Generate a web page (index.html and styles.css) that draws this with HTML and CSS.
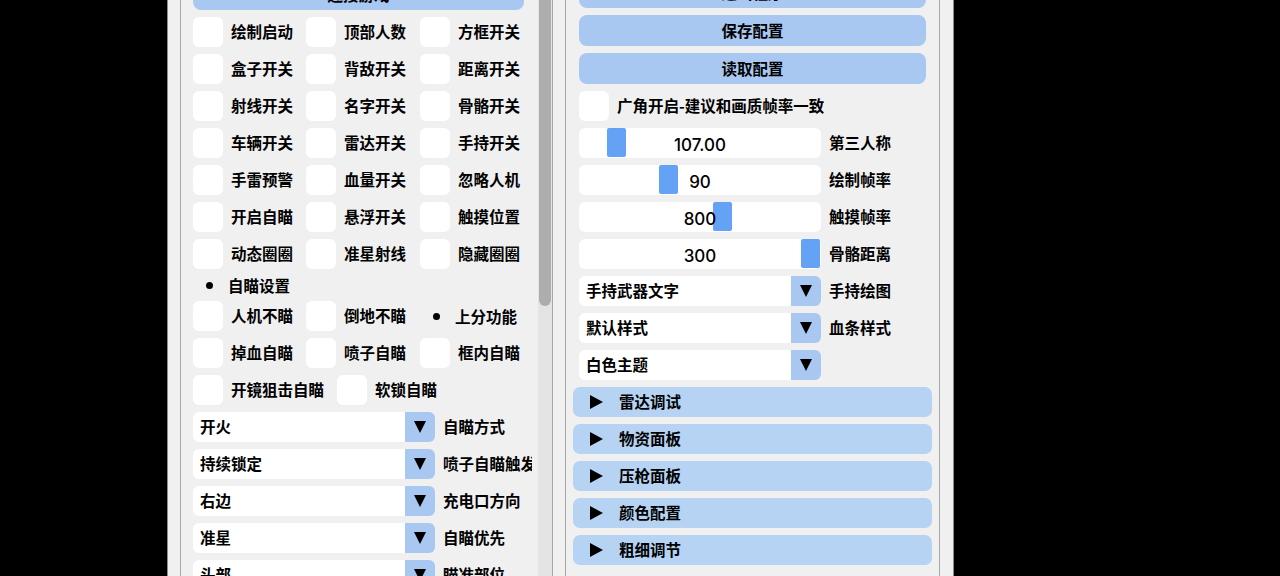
FILE: index.html
```html
<!DOCTYPE html>
<html lang="zh-CN">
<head>
  <meta charset="UTF-8" />
  <meta name="viewport" content="width=device-width, initial-scale=1.0"/>
  <title>菜单</title>
  <link rel="stylesheet" href="styles.css">
</head>
<body>
<div class="window">
  <div class="child child-left">
    <div class="content">
      <button class="btn">连接游戏</button>

      <div class="grid-row">
        <label class="check"><span class="box"></span>绘制启动</label>
        <label class="check"><span class="box"></span>顶部人数</label>
        <label class="check"><span class="box"></span>方框开关</label>
      </div>
      <div class="grid-row">
        <label class="check"><span class="box"></span>盒子开关</label>
        <label class="check"><span class="box"></span>背敌开关</label>
        <label class="check"><span class="box"></span>距离开关</label>
      </div>
      <div class="grid-row">
        <label class="check"><span class="box"></span>射线开关</label>
        <label class="check"><span class="box"></span>名字开关</label>
        <label class="check"><span class="box"></span>骨骼开关</label>
      </div>
      <div class="grid-row">
        <label class="check"><span class="box"></span>车辆开关</label>
        <label class="check"><span class="box"></span>雷达开关</label>
        <label class="check"><span class="box"></span>手持开关</label>
      </div>
      <div class="grid-row">
        <label class="check"><span class="box"></span>手雷预警</label>
        <label class="check"><span class="box"></span>血量开关</label>
        <label class="check"><span class="box"></span>忽略人机</label>
      </div>
      <div class="grid-row">
        <label class="check"><span class="box"></span>开启自瞄</label>
        <label class="check"><span class="box"></span>悬浮开关</label>
        <label class="check"><span class="box"></span>触摸位置</label>
      </div>
      <div class="grid-row">
        <label class="check"><span class="box"></span>动态圈圈</label>
        <label class="check"><span class="box"></span>准星射线</label>
        <label class="check"><span class="box"></span>隐藏圈圈</label>
      </div>

      <div class="bullet-text bullet-row"><span class="dot"></span>自瞄设置</div>

      <div class="grid-row">
        <label class="check"><span class="box"></span>人机不瞄</label>
        <label class="check"><span class="box"></span>倒地不瞄</label>
        <div class="bullet-text"><span class="dot"></span>上分功能</div>
      </div>
      <div class="grid-row">
        <label class="check"><span class="box"></span>掉血自瞄</label>
        <label class="check"><span class="box"></span>喷子自瞄</label>
        <label class="check"><span class="box"></span>框内自瞄</label>
      </div>
      <div class="flow-row">
        <label class="check"><span class="box"></span>开镜狙击自瞄</label>
        <label class="check"><span class="box"></span>软锁自瞄</label>
      </div>

      <div class="combo-row">
        <div class="combo"><span class="combo-value">开火</span><span class="combo-arrow"><i class="down"></i></span></div>
        <span class="item-label">自瞄方式</span>
      </div>
      <div class="combo-row">
        <div class="combo"><span class="combo-value">持续锁定</span><span class="combo-arrow"><i class="down"></i></span></div>
        <span class="item-label">喷子自瞄触发</span>
      </div>
      <div class="combo-row">
        <div class="combo"><span class="combo-value">右边</span><span class="combo-arrow"><i class="down"></i></span></div>
        <span class="item-label">充电口方向</span>
      </div>
      <div class="combo-row">
        <div class="combo"><span class="combo-value">准星</span><span class="combo-arrow"><i class="down"></i></span></div>
        <span class="item-label">自瞄优先</span>
      </div>
      <div class="combo-row">
        <div class="combo"><span class="combo-value">头部</span><span class="combo-arrow"><i class="down"></i></span></div>
        <span class="item-label">瞄准部位</span>
      </div>
    </div>
    <div class="scrollbar"><div class="thumb"></div></div>
  </div>

  <div class="child child-right">
    <div class="content">
      <button class="btn">退出程序</button>
      <button class="btn">保存配置</button>
      <button class="btn">读取配置</button>

      <label class="check"><span class="box"></span>广角开启-建议和画质帧率一致</label>

      <div class="slider-row">
        <div class="slider"><span class="grab" style="left: 28px"></span><span class="slider-value">107.00</span></div>
        <span class="item-label">第三人称</span>
      </div>
      <div class="slider-row">
        <div class="slider"><span class="grab" style="left: 80px"></span><span class="slider-value">90</span></div>
        <span class="item-label">绘制帧率</span>
      </div>
      <div class="slider-row">
        <div class="slider"><span class="grab" style="left: 134px"></span><span class="slider-value">800</span></div>
        <span class="item-label">触摸帧率</span>
      </div>
      <div class="slider-row">
        <div class="slider"><span class="grab" style="left: 222px"></span><span class="slider-value">300</span></div>
        <span class="item-label">骨骼距离</span>
      </div>

      <div class="combo-row">
        <div class="combo"><span class="combo-value">手持武器文字</span><span class="combo-arrow"><i class="down"></i></span></div>
        <span class="item-label">手持绘图</span>
      </div>
      <div class="combo-row">
        <div class="combo"><span class="combo-value">默认样式</span><span class="combo-arrow"><i class="down"></i></span></div>
        <span class="item-label">血条样式</span>
      </div>
      <div class="combo-row">
        <div class="combo"><span class="combo-value">白色主题</span><span class="combo-arrow"><i class="down"></i></span></div>
      </div>

      <div class="header"><i class="right"></i>雷达调试</div>
      <div class="header"><i class="right"></i>物资面板</div>
      <div class="header"><i class="right"></i>压枪面板</div>
      <div class="header"><i class="right"></i>颜色配置</div>
      <div class="header"><i class="right"></i>粗细调节</div>
    </div>
  </div>
</div>
</body>
</html>
```

FILE: styles.css
```css
html, body {
  margin: 0;
  height: 576px;
  overflow: hidden;
  background: #000;
}

body {
  font-family: "Noto Sans CJK SC", "Noto Sans", sans-serif;
  font-size: 15.5px;
  font-weight: 700;
  color: #000;
}

.window {
  display: flex;
  gap: 12px;
  margin-top: -40px;
  margin-left: 167px;
  width: 787px;
  height: 660px;
  padding-left: 12px;
  box-sizing: border-box;
  background: #f0f0f0;
  border-left: 1px solid #8c8c8c;
  border-right: 1px solid #8c8c8c;
}

.child {
  display: flex;
  height: 100%;
  box-sizing: border-box;
  border: 1px solid #a6a6a6;
  border-radius: 4px;
}

.child-left {
  width: 373px;
  padding: 18px 0 0 12px;
}

.child-right {
  width: 375px;
  padding: 16px 13px 0 13px;
}

.content {
  display: flex;
  flex-direction: column;
  gap: 7px;
  width: 100%;
}

.child-left .content {
  width: 339px;
  overflow: hidden;
  flex-shrink: 0;
}

.child-left .btn {
  width: 331px;
}

/* scrollbar */
.scrollbar {
  width: 14px;
  margin-left: 6px;
  background: #e4e4e4;
  margin-top: -18px;
}

.thumb {
  margin: 0 1px;
  height: 345px;
  border-radius: 6px;
  background: #adadad;
}

/* buttons */
.btn {
  height: 31px;
  border: none;
  border-radius: 8px;
  background: #a8c8f1;
  font: inherit;
  color: #000;
  padding: 0 0 2px;
  flex-shrink: 0;
}

/* checkboxes */
.grid-row {
  display: grid;
  grid-template-columns: 113px 114px 1fr;
  height: 30px;
  flex-shrink: 0;
}

.flow-row {
  display: flex;
  gap: 13px;
  height: 30px;
  flex-shrink: 0;
}

.check {
  display: flex;
  align-items: center;
  gap: 8px;
  height: 30px;
  padding-bottom: 2px;
  box-sizing: border-box;
  white-space: nowrap;
  flex-shrink: 0;
}

.box {
  width: 30px;
  height: 30px;
  margin-top: 2px;
  border-radius: 6px;
  background: #fff;
  flex-shrink: 0;
}

.bullet-text {
  display: flex;
  align-items: center;
  padding-left: 13px;
  white-space: nowrap;
}

.bullet-row {
  height: 18px;
  flex-shrink: 0;
}

.dot {
  width: 7px;
  height: 7px;
  border-radius: 50%;
  background: #000;
  margin-right: 15px;
}

.item-label {
  white-space: nowrap;
  margin-top: -2px;
}

/* combos */
.combo-row, .slider-row {
  display: flex;
  align-items: center;
  gap: 8px;
  height: 30px;
  flex-shrink: 0;
}

.combo {
  display: flex;
  width: 242px;
  height: 30px;
  flex-shrink: 0;
}

.combo-value {
  flex: 1;
  display: flex;
  align-items: center;
  padding: 0 0 2px 7px;
  background: #fff;
  border-radius: 6px 0 0 6px;
}

.combo-arrow {
  width: 30px;
  display: flex;
  align-items: center;
  justify-content: center;
  background: #a8c8f1;
  border-radius: 0 6px 6px 0;
}

.down {
  width: 0;
  height: 0;
  border-top: 12px solid #000;
  border-left: 6.5px solid transparent;
  border-right: 6.5px solid transparent;
}

/* sliders */
.slider {
  position: relative;
  width: 242px;
  height: 30px;
  flex-shrink: 0;
  background: #fff;
  border-radius: 6px;
}

.grab {
  position: absolute;
  top: 0;
  bottom: 1px;
  width: 19px;
  background: #64a2f5;
  border-radius: 2px;
}

.slider-value {
  position: relative;
  display: block;
  text-align: center;
  line-height: 30px;
  padding-top: 2px;
  font-family: Inter, "Noto Sans", sans-serif;
  font-weight: 500;
  font-size: 17px;
}

/* collapsing headers */
.header {
  display: flex;
  align-items: center;
  height: 30px;
  margin: 0 -6px;
  padding: 0 0 2px 17px;
  box-sizing: border-box;
  border-radius: 7px;
  background: #b6d3f4;
  flex-shrink: 0;
}

.right {
  width: 0;
  height: 0;
  margin-top: 2px;
  border-left: 13px solid #000;
  border-top: 7px solid transparent;
  border-bottom: 7px solid transparent;
  margin-right: 16px;
}
```
